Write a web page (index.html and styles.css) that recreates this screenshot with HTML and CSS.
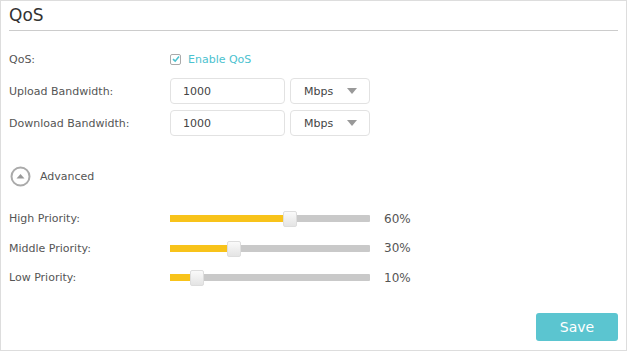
FILE: index.html
```html
<!DOCTYPE html>
<html lang="en">
<head>
    <meta charset="UTF-8">
    <meta name="viewport" content="width=device-width, initial-scale=1.0">
    <title>QoS</title>
    <link rel="stylesheet" href="styles.css">
</head>
<body>

<div class="panel">
    <h2 class="title">QoS</h2>

    <div class="row">
        <label class="label">QoS:</label>
        <label class="check">
            <span class="box">
                <svg width="8" height="8" viewBox="0 0 8 8"><path d="M1 4.2 L3.2 6.2 L7 1.6" fill="none" stroke="#4cc2cf" stroke-width="1.6"/></svg>
            </span>
            Enable QoS
        </label>
    </div>

    <div class="row">
        <label class="label" for="up">Upload Bandwidth:</label>
        <input class="text" type="text" id="up" value="1000">
        <div class="select">Mbps <span class="caret"></span></div>
    </div>

    <div class="row">
        <label class="label" for="down">Download Bandwidth:</label>
        <input class="text" type="text" id="down" value="1000">
        <div class="select">Mbps <span class="caret"></span></div>
    </div>

    <div class="advanced">
        <svg width="21" height="21" viewBox="0 0 21 21">
            <circle cx="10.5" cy="10.5" r="9" fill="none" stroke="#aaa" stroke-width="2"/>
            <path d="M6.5 12.5 L10.5 8 L14.5 12.5 Z" fill="#999"/>
        </svg>
        <span>Advanced</span>
    </div>

    <div class="prio">
        <span class="label">High Priority:</span>
        <div class="slider">
            <div class="fill" style="width: 60%"></div>
            <div class="handle" style="left: 113px"></div>
        </div>
        <span class="pct">60%</span>
    </div>
    <div class="prio">
        <span class="label">Middle Priority:</span>
        <div class="slider">
            <div class="fill" style="width: 30%"></div>
            <div class="handle" style="left: 57px"></div>
        </div>
        <span class="pct">30%</span>
    </div>
    <div class="prio">
        <span class="label">Low Priority:</span>
        <div class="slider">
            <div class="fill" style="width: 10%"></div>
            <div class="handle" style="left: 20px"></div>
        </div>
        <span class="pct">10%</span>
    </div>

    <div class="actions">
        <button class="save">Save</button>
    </div>
</div>

</body>
</html>
```

FILE: styles.css
```css
body {
    font-family: "DejaVu Sans", Tahoma, sans-serif;
    margin: 0;
    padding: 0;
    background-color: #fff;
    color: #555;
    font-size: 11px;
}

.panel {
    box-sizing: border-box;
    width: 627px;
    height: 351px;
    border: 1px solid #ddd;
    padding: 0 8px;
    display: flex;
    flex-direction: column;
}

.title {
    font-weight: normal;
    font-size: 17px;
    color: #333;
    margin: 0;
    padding: 4px 0 5px 0;
    border-bottom: 1px solid #ccc;
    margin-bottom: 12px;
}

.row {
    display: flex;
    align-items: center;
    height: 32px;
}

.label {
    width: 161px;
    flex-shrink: 0;
}

.check {
    display: flex;
    align-items: center;
    color: #4cc2cf;
}

.box {
    width: 9px;
    height: 9px;
    border: 1px solid #aaa;
    border-radius: 2px;
    margin-right: 7px;
    display: flex;
    align-items: center;
    justify-content: center;
}

.text {
    width: 115px;
    height: 26px;
    box-sizing: border-box;
    border: 1px solid #e2e2e2;
    border-radius: 4px;
    padding: 0 12px;
    font-family: inherit;
    font-size: 11px;
    color: #444;
    margin: 0;
}

.select {
    width: 80px;
    height: 26px;
    box-sizing: border-box;
    border: 1px solid #e2e2e2;
    border-radius: 4px;
    margin-left: 5px;
    padding: 0 12px 0 13px;
    display: flex;
    align-items: center;
    justify-content: space-between;
    color: #444;
}

.caret {
    width: 0;
    height: 0;
    border-left: 5px solid transparent;
    border-right: 5px solid transparent;
    border-top: 6px solid #999;
}

.advanced {
    display: flex;
    align-items: center;
    margin-top: 27px;
    margin-left: 1px;
    height: 21px;
}

.advanced span {
    margin-left: 9px;
}

.prio {
    display: flex;
    align-items: center;
    height: 29.5px;
}

.advanced + .prio {
    margin-top: 17px;
}

.slider {
    position: relative;
    width: 200px;
    height: 7px;
    background-color: #c9c9c9;
    border-radius: 1px;
}

.fill {
    height: 100%;
    background-color: #f8c31a;
}

.handle {
    position: absolute;
    top: -4px;
    width: 12px;
    height: 14px;
    border: 1px solid #ddd;
    border-radius: 2px;
    background: linear-gradient(#fafafa, #e4e4e4);
}

.pct {
    margin-left: 14px;
    font-size: 12px;
}

.actions {
    margin-top: auto;
    display: flex;
    justify-content: flex-end;
    padding-bottom: 9px;
}

.save {
    width: 82px;
    height: 28px;
    border: none;
    border-radius: 3px;
    background-color: #5bc5d0;
    color: #fff;
    font-family: inherit;
    font-size: 14px;
    cursor: pointer;
}
```
